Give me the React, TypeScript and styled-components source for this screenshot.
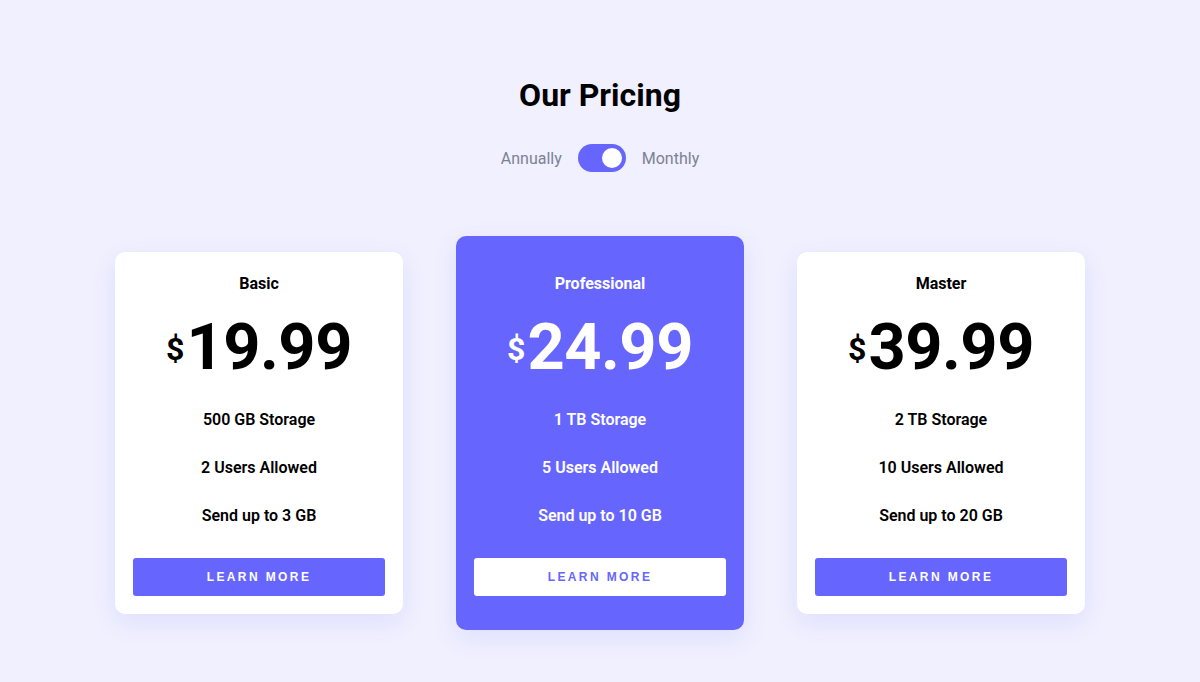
import React, { useState } from 'react';
import styled, { createGlobalStyle } from 'styled-components';

const GlobalStyle = createGlobalStyle`
  * { box-sizing: border-box; }
  body {
    margin: 0;
    background: #f0f0fe;
    font-family: Roboto, "Noto Sans", sans-serif;
    color: #000;
  }
`;

const Page = styled.main`
  min-height: 682px;
  display: flex;
  flex-direction: column;
  align-items: center;
  padding-top: 74px;
`;

const Title = styled.h1`
  margin: 0;
  font-size: 32px;
  line-height: 42px;
  font-weight: 700;
`;

const ToggleRow = styled.div`
  display: flex;
  align-items: center;
  gap: 16px;
  margin-top: 28px;
  font-size: 16px;
  color: #7b8296;
`;

const Track = styled.button<{ $on: boolean }>`
  width: 48px;
  height: 28px;
  border: none;
  border-radius: 14px;
  background: #6666ff;
  padding: 4px;
  display: flex;
  justify-content: ${p => (p.$on ? 'flex-end' : 'flex-start')};
  cursor: pointer;
`;

const Knob = styled.span`
  width: 20px;
  height: 20px;
  border-radius: 50%;
  background: #fff;
`;

const Cards = styled.div`
  display: flex;
  align-items: center;
  gap: 53px;
  margin-top: 64px;
`;

const Card = styled.section<{ $featured?: boolean }>`
  width: 288px;
  border-radius: 10px;
  background: ${p => (p.$featured ? '#6666ff' : '#fff')};
  color: ${p => (p.$featured ? '#fff' : '#000')};
  padding: ${p => (p.$featured ? '38px 18px 34px' : '22px 18px 18px')};
  box-shadow: 0 8px 24px rgba(102, 102, 255, 0.12);
  display: flex;
  flex-direction: column;
  align-items: center;
`;

const PlanName = styled.h2`
  margin: 0;
  font-size: 16px;
  line-height: 19px;
  font-weight: 700;
`;

const Price = styled.div`
  display: flex;
  align-items: center;
  margin-top: 14px;
  height: 80px;
  font-weight: 700;
`;

const Dollar = styled.span`
  font-size: 32px;
  margin-right: 2px;
  margin-top: 4px;
`;

const Amount = styled.span`
  font-size: 65px;
  line-height: 80px;
  letter-spacing: -0.5px;
`;

const Features = styled.ul`
  list-style: none;
  margin: 23px 0 0;
  padding: 0;
  display: flex;
  flex-direction: column;
  gap: 29px;
  align-items: center;
`;

const Feature = styled.li`
  font-size: 16px;
  line-height: 19px;
  font-weight: 600;
`;

const Button = styled.button<{ $inverse?: boolean }>`
  margin-top: 33px;
  width: 100%;
  height: 38px;
  border: none;
  border-radius: 3px;
  background: ${p => (p.$inverse ? '#fff' : '#6666ff')};
  color: ${p => (p.$inverse ? '#6666ff' : '#fff')};
  font-family: "Liberation Sans", Arial, sans-serif;
  font-size: 12px;
  font-weight: 700;
  letter-spacing: 2.4px;
  text-transform: uppercase;
  cursor: pointer;
`;

const plans = [
  { name: 'Basic', price: '19.99', features: ['500 GB Storage', '2 Users Allowed', 'Send up to 3 GB'] },
  { name: 'Professional', price: '24.99', features: ['1 TB Storage', '5 Users Allowed', 'Send up to 10 GB'], featured: true },
  { name: 'Master', price: '39.99', features: ['2 TB Storage', '10 Users Allowed', 'Send up to 20 GB'] },
];

export default function App() {
  const [monthly, setMonthly] = useState(true);
  return (
    <>
      <GlobalStyle />
      <Page>
        <Title>Our Pricing</Title>
        <ToggleRow>
          <span>Annually</span>
          <Track $on={monthly} onClick={() => setMonthly(!monthly)} aria-label="toggle billing">
            <Knob />
          </Track>
          <span>Monthly</span>
        </ToggleRow>
        <Cards>
          {plans.map(plan => (
            <Card key={plan.name} $featured={plan.featured}>
              <PlanName>{plan.name}</PlanName>
              <Price>
                <Dollar>$</Dollar>
                <Amount>{plan.price}</Amount>
              </Price>
              <Features>
                {plan.features.map(f => (
                  <Feature key={f}>{f}</Feature>
                ))}
              </Features>
              <Button $inverse={plan.featured}>Learn More</Button>
            </Card>
          ))}
        </Cards>
      </Page>
    </>
  );
}
